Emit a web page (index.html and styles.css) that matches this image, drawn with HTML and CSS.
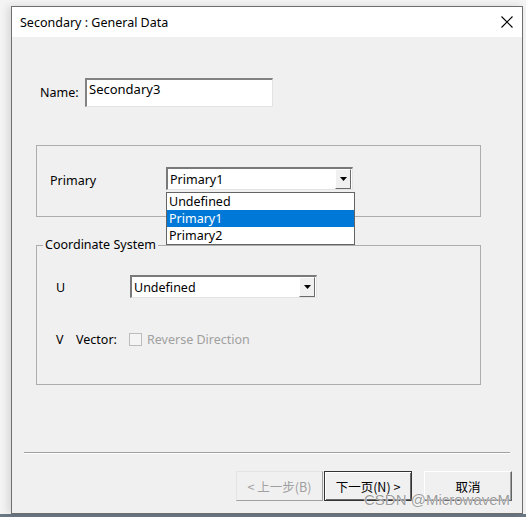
FILE: index.html
```html
<!DOCTYPE html>
<html>
<head>
<meta charset="utf-8">
<link rel="stylesheet" href="styles.css">
</head>
<body>
<div class="screen">
  <div class="dialog">
    <div class="titlebar">
      <span class="title">Secondary : General Data</span>
      <svg class="close" width="12" height="12" viewBox="0 0 12 12"><path d="M0.5 0.5L11.5 11.5M11.5 0.5L0.5 11.5" stroke="#000" stroke-width="1.1" fill="none"/></svg>
    </div>
    <div class="body">
      <div class="name-row">
        <span class="name-label">Name:</span>
        <div class="textbox">Secondary3</div>
      </div>
      <div class="group1">
        <span class="primary-label">Primary</span>
        <div class="combo-wrap">
          <div class="combo">
            <span class="combo-text">Primary1</span>
            <span class="combo-btn"><svg width="7" height="4" viewBox="0 0 7 4"><path d="M0 0H7L3.5 4Z" fill="#000"/></svg></span>
          </div>
          <ul class="dropdown">
            <li>Undefined</li>
            <li class="selected">Primary1</li>
            <li>Primary2</li>
          </ul>
        </div>
      </div>
      <fieldset class="group2">
        <legend>Coordinate System</legend>
        <div class="row-u">
          <span class="u-label">U</span>
          <div class="combo">
            <span class="combo-text">Undefined</span>
            <span class="combo-btn"><svg width="7" height="4" viewBox="0 0 7 4"><path d="M0 0H7L3.5 4Z" fill="#000"/></svg></span>
          </div>
        </div>
        <div class="row-v">
          <span class="v-label">V</span>
          <span class="vector-label">Vector:</span>
          <span class="checkbox"></span>
          <span class="disabled-text">Reverse Direction</span>
        </div>
      </fieldset>
      <div class="separator"></div>
      <div class="buttons">
        <div class="btn btn-disabled">&lt;&nbsp;上一步(B)</div>
        <div class="btn btn-default">下一页(N)&nbsp;&gt;</div>
        <div class="btn btn-cancel">取消</div>
      </div>
    </div>
    <div class="watermark">CSDN @MicrowaveM</div>
  </div>
</div>
</body>
</html>
```
FILE: styles.css
```css
* { box-sizing: border-box; }
html, body { margin: 0; padding: 0; }
body {
  width: 526px;
  height: 517px;
  overflow: hidden;
  background: linear-gradient(to bottom, #f4f4f4 0, #f4f4f4 514px, #6b7885 514px);
  font-family: "Noto Sans", "Noto Sans CJK SC", sans-serif;
  font-size: 12.5px;
  color: #000;
}
.screen { padding: 6px 0 0 11px; }
.dialog {
  position: relative;
  width: 512px;
  height: 508px;
  border: 1px solid #6e6e6e;
  background: #f0f0f0;
  box-shadow: -3px 0 8px rgba(0,0,0,0.12);
}
.titlebar {
  height: 30px;
  background: #fff;
  display: flex;
  align-items: center;
  justify-content: space-between;
  padding: 0 9px 0 8px;
}
.title { font-size: 12.5px; }
.close { display: block; }
.body { padding: 41px 0 0 0; }
.name-row {
  display: flex;
  align-items: center;
  padding-left: 28px;
}
.name-label { width: 45px; }
.textbox {
  width: 188px;
  height: 29px;
  background: #fff;
  border-top: 2px solid #828282;
  border-left: 2px solid #828282;
  border-right: 1px solid #e3e3e3;
  border-bottom: 1px solid #e3e3e3;
  padding: 0 0 0 2px;
  font-size: 13px;
  line-height: 18px;
}
.group1 {
  margin: 38px 0 0 24px;
  width: 445px;
  height: 72px;
  border: 1px solid #adadad;
  display: flex;
  align-items: flex-start;
  padding: 21px 0 0 13px;
}
.primary-label { width: 116px; line-height: 23px; padding-top: 2px; }
.combo-wrap { position: relative; }
.combo {
  width: 187px;
  height: 23px;
  background: #fff;
  border-top: 2px solid #7a7a7a;
  border-left: 2px solid #7a7a7a;
  border-right: 1px solid #e3e3e3;
  border-bottom: 1px solid #e3e3e3;
  display: flex;
  align-items: center;
  justify-content: space-between;
}
.combo-text { padding-left: 2px; line-height: 19px; }
.combo-btn {
  width: 16px;
  height: 20px;
  background: #f0f0f0;
  border-top: 1px solid #fff;
  border-left: 1px solid #fff;
  border-right: 1px solid #6a6a6a;
  border-bottom: 1px solid #6a6a6a;
  display: flex;
  align-items: center;
  justify-content: center;
  margin-right: 1px;
}
.dropdown {
  position: absolute;
  left: 0;
  top: 25px;
  width: 189px;
  margin: 0;
  padding: 0;
  list-style: none;
  background: #fff;
  border: 1px solid #646464;
  z-index: 5;
}
.dropdown li {
  height: 17px;
  line-height: 17px;
  padding-left: 2px;
}
.dropdown li.selected { background: #0078d7; color: #fff; }
.group2 {
  margin: 20px 0 0 24px;
  width: 445px;
  height: 148px;
  border: 1px solid #adadad;
  padding: 0 0 0 19px;
  min-width: 0;
}
.group2 legend {
  margin-left: -13px;
  padding: 0 2px;
  line-height: 16px;
}
.row-u {
  display: flex;
  align-items: center;
  margin-top: 22px;
}
.u-label { width: 74px; padding-top: 1px; }
.row-v {
  display: flex;
  align-items: center;
  margin-top: 33px;
  height: 16px;
}
.v-label { width: 20px; }
.vector-label { width: 53px; }
.checkbox {
  width: 13px;
  height: 13px;
  border: 1px solid #bcbcbc;
  background: #f4f4f4;
  margin-right: 5px;
}
.disabled-text { color: #a0a0a0; }
.separator {
  margin: 67px 0 0 12px;
  width: 486px;
  height: 2px;
  border-top: 1px solid #a0a0a0;
  border-bottom: 1px solid #fff;
}
.buttons {
  display: flex;
  justify-content: flex-end;
  padding-right: 10px;
  margin-top: 17px;
}
.btn {
  height: 30px;
  display: flex;
  align-items: center;
  justify-content: center;
  background: #f0f0f0;
  font-family: "Noto Sans CJK SC", sans-serif;
  font-size: 12.5px;
}
.btn-disabled {
  width: 87px;
  color: #a0a0a0;
  border-top: 1px solid #e3e3e3;
  border-left: 1px solid #e3e3e3;
  border-right: 1px solid #a0a0a0;
  border-bottom: 1px solid #a0a0a0;
  margin-right: 1px;
}
.btn-default {
  width: 88px;
  border: 1px solid #333;
  box-shadow: inset 1px 1px 0 #fff, inset -1px -1px 0 #6a6a6a;
  margin-right: 12px;
}
.btn-cancel {
  width: 88px;
  border-top: 1px solid #fff;
  border-left: 1px solid #fff;
  border-right: 1px solid #646464;
  border-bottom: 1px solid #646464;
  box-shadow: inset -1px -1px 0 #a0a0a0;
}
.watermark {
  position: absolute;
  left: 352px;
  top: 484px;
  font-family: "Liberation Sans", sans-serif;
  font-size: 15px;
  color: rgba(110,110,110,0.7);
  text-shadow: 0 0 1px #fff, 0 0 1px #fff;
  z-index: 6;
  pointer-events: none;
}
```
